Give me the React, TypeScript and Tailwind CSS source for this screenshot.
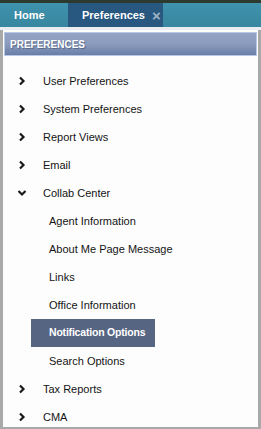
const font = { fontFamily: "'Liberation Sans', Arial, sans-serif" };

type Item = { label: string; open?: boolean; children?: string[] };

const items: Item[] = [
  { label: "User Preferences" },
  { label: "System Preferences" },
  { label: "Report Views" },
  { label: "Email" },
  {
    label: "Collab Center",
    open: true,
    children: [
      "Agent Information",
      "About Me Page Message",
      "Links",
      "Office Information",
      "Notification Options",
      "Search Options",
    ],
  },
  { label: "Tax Reports" },
  { label: "CMA" },
];

function Chevron({ open }: { open?: boolean }) {
  return (
    <svg width="10" height="10" viewBox="0 0 10 10" className="text-[#1a1a1a]">
      {open ? (
        <polyline points="1.5,3 5,6.5 8.5,3" fill="none" stroke="currentColor" strokeWidth="2.2" />
      ) : (
        <polyline points="3,1.5 6.5,5 3,8.5" fill="none" stroke="currentColor" strokeWidth="2.2" />
      )}
    </svg>
  );
}

function Row({ item }: { item: Item }) {
  return (
    <>
      <div className="h-[28px] flex items-center shrink-0">
        <span className="w-[39px] pl-[13px] flex items-center">
          <Chevron open={item.open} />
        </span>
        <span className="text-[11px] text-[#141414] whitespace-nowrap">{item.label}</span>
      </div>
      {item.children?.map((c) => {
        const sel = c === "Notification Options";
        return (
          <div key={c} className="h-[28px] flex items-center pl-[27px] shrink-0">
            <span
              className={
                "h-[28px] flex items-center pl-[18px] whitespace-nowrap " +
                (sel
                  ? "bg-[#566582] text-white font-bold w-[124px] text-[10.5px] tracking-[-0.2px]"
                  : "text-[#141414] text-[11px]")
              }
            >
              {c}
            </span>
          </div>
        );
      })}
    </>
  );
}

export default function App() {
  return (
    <div className="w-[261px] h-[429px] bg-[#e9ecf0] flex flex-col overflow-hidden" style={font}>
      <div className="h-[27px] shrink-0 flex items-end border-t-[3px] border-[#2c3a30] bg-gradient-to-b from-[#3f93ad] to-[#3886a0]">
        <div className="w-[68px] h-[24px] flex items-center pl-[14px] text-white font-bold text-[11px]">
          Home
        </div>
        <div className="w-[95px] h-[24px] bg-[#285880] flex items-center pl-[14px] text-white font-bold text-[11px]">
          <span>Preferences</span>
          <span className="ml-[7px] text-[#9fb3c6] text-[15px] leading-none">×</span>
        </div>
      </div>
      <div className="h-[3px] shrink-0" />
      <div className="flex-1 min-h-0 overflow-hidden flex flex-col border-x-[3px] border-b-[2px] border-[#a9a9a9] bg-[#fdfdfd] pt-[2px] px-[1px]">
        <div className="h-[24px] shrink-0 border border-[#b9c7e6] bg-gradient-to-b from-[#95a4c4] via-[#8b9bbd] to-[#6a7ea6] flex items-center pl-[5px]">
          <span
            className="text-white font-bold text-[10px]"
            style={{ textShadow: "1px 1px 0 #5a6a8a" }}
          >
            PREFERENCES
          </span>
        </div>
        <div className="pt-[11px] flex-1 min-h-0 overflow-hidden">
          {items.map((it) => (
            <Row key={it.label} item={it} />
          ))}
        </div>
      </div>
    </div>
  );
}
